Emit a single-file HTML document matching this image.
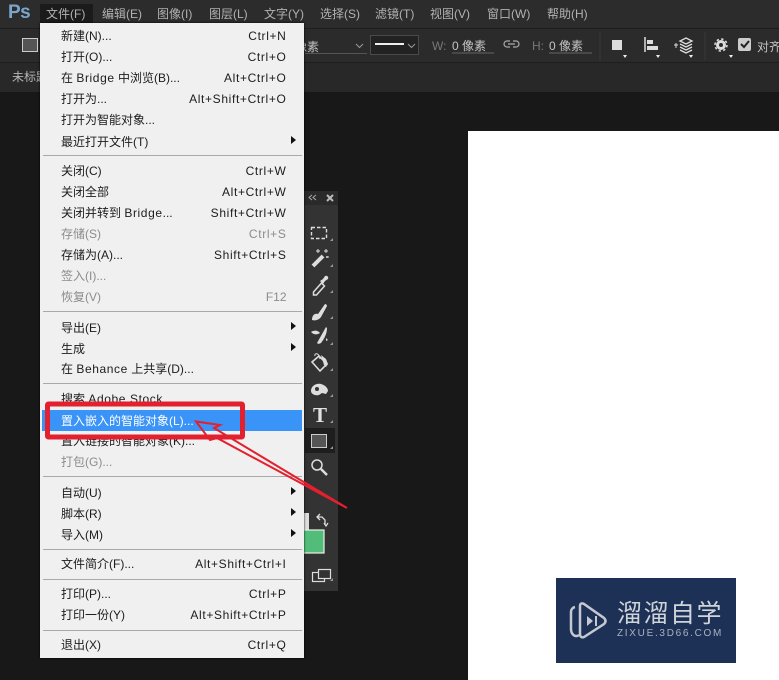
<!DOCTYPE html>
<html><head><meta charset="utf-8"><style>
*{margin:0;padding:0;box-sizing:border-box}
html,body{width:779px;height:680px;overflow:hidden;background:#191919}
body{position:relative;font-family:"Liberation Sans","Noto Sans CJK SC",sans-serif}
.a{position:absolute}
.t{position:absolute;white-space:nowrap;font-size:12px;line-height:16px}
.bar span{position:absolute;top:6px;font-size:12px;line-height:16px;color:#b2b2b2;white-space:nowrap}
.i{position:absolute;left:21px;white-space:nowrap;font-size:12px;line-height:16px;color:#1c1c1c}
.i b{font-weight:normal;letter-spacing:.6px}
.k{position:absolute;right:17.500px;white-space:nowrap;font-size:12px;line-height:16px;color:#1c1c1c;letter-spacing:.65px}
.d{color:#8c8c8c}
.s{position:absolute;left:3px;right:2px;height:1px;background:#a9a9a9}
.r{position:absolute;left:251px;width:0;height:0;border-left:5px solid #111;border-top:4px solid transparent;border-bottom:4px solid transparent}
</style></head><body>
<div class="a" style="left:0;top:0;width:779px;height:28px;background:#2c2c2c"></div>
<div class="a" style="left:0;top:28px;width:779px;height:35px;background:#2b2b2b;border-top:1px solid #1d1d1d;border-bottom:1px solid #1e1e1e"></div>
<div class="a" style="left:0;top:63px;width:779px;height:29px;background:#282828"></div>
<div class="a" style="left:0;top:92px;width:779px;height:588px;background:#181818"></div>
<div class="t" style="left:8px;top:1px;font-size:19px;line-height:24px;font-weight:bold;color:#7ba5cc;letter-spacing:-.5px">Ps</div>
<div class="a" style="left:40px;top:4px;width:53px;height:19px;background:#1b1b1b"></div>
<div class="bar">
<span style="left:46px">文件(F)</span><span style="left:102px">编辑(E)</span><span style="left:157px">图像(I)</span><span style="left:209px">图层(L)</span><span style="left:264px">文字(Y)</span><span style="left:320px">选择(S)</span><span style="left:375px">滤镜(T)</span><span style="left:430px">视图(V)</span><span style="left:487px">窗口(W)</span><span style="left:547px">帮助(H)</span>
</div>
<div class="a" style="left:22px;top:38px;width:16px;height:14px;background:#555;border:1px solid #ccc"></div>
<div class="t" style="left:12px;top:69px;color:#b5b5b5">未标题</div>
<div class="t" style="left:283px;top:39px;color:#c4c4c4;width:36px;text-align:right">像素</div>
<div class="a" style="left:305px;top:53px;width:62px;height:1px;background:#555"></div>
<svg class="a" style="left:0;top:28px" width="779" height="36" viewBox="0 28 779 36" fill="none">
<path d="M356 44l3.500 3.500 3.500-3.500" stroke="#999"/>
<rect x="370.500" y="35.500" width="48" height="19" stroke="#4a4a4a" fill="#222"/>
<path d="M375 44h29" stroke="#eee" stroke-width="2"/>
<path d="M408 44l3.500 3.500 3.500-3.500" stroke="#999"/>
<path d="M452 53h42M549 53h43" stroke="#666"/>
<path d="M510 41h-3a3 3 0 0 0 0 6h3M513 41h3a3 3 0 0 1 0 6h-3M508 44h7" stroke="#aaa" stroke-width="1.200"/>
<path d="M600 32v28M705 32v28" stroke="#383838"/>
<rect x="612" y="40" width="10" height="10" fill="#ddd"/>
<path d="M645 37v15" stroke="#ddd" stroke-width="1.500"/><rect x="647" y="40" width="6" height="4" fill="#ddd"/><rect x="647" y="46" width="11" height="4" fill="#ddd"/>
<path d="M674 45h4M676 43v5" stroke="#ddd"/>
<path d="M686 38l6 3-6 3-6-3zM680 44l6 3 6-3M680 47l6 3 6-3M680 50l6 3 6-3" stroke="#ddd" stroke-width="1.300"/>
<circle cx="721" cy="45" r="3.500" stroke="#ddd" stroke-width="3"/>
<circle cx="721" cy="45" r="6" stroke="#ddd" stroke-width="1.500" stroke-dasharray="2.400 2.300"/>
<rect x="738" y="38" width="13" height="13" rx="2" fill="#ccc"/>
<path d="M741 44l3 3 5-6" stroke="#222" stroke-width="2"/>
<path d="M623 55h4l-2 3zM656 55h4l-2 3zM689 55h4l-2 3zM729 55h4l-2 3z" fill="#eee"/>
</svg>
<div class="t" style="left:432px;top:38px;color:#777">W:</div>
<div class="t" style="left:452px;top:38px;color:#c4c4c4">0 像素</div>
<div class="t" style="left:532px;top:38px;color:#777">H:</div>
<div class="t" style="left:549px;top:38px;color:#c4c4c4">0 像素</div>
<div class="t" style="left:757px;top:39px;color:#c4c4c4">对齐</div>

<div class="a" style="left:468px;top:131px;width:311px;height:549px;background:#fff"></div>
<div class="a" style="left:556px;top:578px;width:180px;height:85px;background:#1d3055"></div>
<svg class="a" style="left:556px;top:578px" width="180" height="85" viewBox="0 0 180 85" fill="none">
<path d="M19 29a5 5 0 0 0-4 5v17c0 5 4 9 8 6" stroke="#c3c8d1" stroke-width="2.500"/>
<path d="M24 28c0-3 2-3 4-2l20 14c2 2 2 4 0 6l-20 13c-2 1-4 0-4-3z" stroke="#c3c8d1" stroke-width="2.500"/>
<path d="M31 38l6 5-6 5zM39 38h2v10h-2z" fill="#c3c8d1"/>
</svg>
<div class="t" style="left:617px;top:600px;font-size:25px;line-height:28px;color:#cfd3da;letter-spacing:1.500px">溜溜自学</div>
<div class="t" style="left:617px;top:628px;font-size:10px;line-height:12px;color:#aab1bd;letter-spacing:1.700px">ZIXUE.3D66.COM</div>

<div class="a" style="left:304px;top:191px;width:34px;height:400px;background:#333"></div>
<div class="a" style="left:304px;top:191px;width:34px;height:14px;background:#2a2a2a"></div>
<div class="a" style="left:305px;top:428px;width:30px;height:25px;background:#1e1e1e"></div>
<svg class="a" style="left:290px;top:185px" width="60" height="420" viewBox="0 0 60 420" fill="none">
<path d="M22 10l-3 2.500 3 2.500M26 10l-3 2.500 3 2.500" stroke="#aaa"/>
<path d="M37 10l6 6M43 10l-6 6" stroke="#bbb" stroke-width="2"/>
<rect x="21.500" y="42.500" width="15" height="11" stroke="#ddd" stroke-width="1.400" stroke-dasharray="3.500 2"/>
<path d="M23 81l10-10" stroke="#ddd" stroke-width="4"/>
<path d="M28 64v4M26 66h4M36 64v4M34 66h4M37 71v2M36 72h3" stroke="#ddd"/>
<path d="M23.500 107l8-9 3 3-8 9h-3z" stroke="#ddd" stroke-width="1.500"/>
<path d="M30 96l3-2 2-3c2-1 4 1 3 3l-3 2-2 3z" fill="#ddd"/>
<path d="M22 135c0-4 2-7 6-6l7-10c1 0 2 1 2 2l-6 11c-2 3-6 4-9 3z" fill="#ddd"/>
<path d="M21 147c3-2 7-2 9 1-3 2-6 2-9-1zM27 158l9-16 1 1c0 6-3 11-6 15-2 1-3 1-4 0zM36 153l2 2-2 1z" fill="#ddd"/>
<path d="M22 177l7-6 8 8-7 7z" stroke="#ddd" stroke-width="1.600"/>
<path d="M25 171c-1-3 3-3 4 0l1 3" stroke="#ddd"/>
<path d="M31 170l5 4 2 5-2 3-2-2z" fill="#ddd"/>
<path d="M21 206c0-5 5-8 10-7 4 1 7 4 7 7l-2 3-4-1-3 2c-4 1-8-1-8-4z" fill="#ddd"/><circle cx="27" cy="204" r="2" fill="#333"/>
<rect x="21.500" y="249.500" width="15" height="13" fill="#555" stroke="#ccc"/>
<circle cx="27" cy="280" r="5" stroke="#ddd" stroke-width="1.500"/><path d="M31 284l6 6" stroke="#ddd" stroke-width="2.500"/>
<path d="M43 56v-3l-3 3zM43 82v-3l-3 3zM43 108v-3l-3 3zM43 134v-3l-3 3zM43 160v-3l-3 3zM43 186v-3l-3 3zM43 212v-3l-3 3zM43 238v-3l-3 3zM43 264v-3l-3 3zM43 396v-3l-3 3z" fill="#999"/>
<path d="M27 332h5l3 3v5M34 338l2 3 2-3M30 329l-3 3 3 3" stroke="#ddd" stroke-width="1.300"/>
<rect x="10" y="328" width="9" height="17" fill="#ddd"/>
<rect x="5" y="345" width="29" height="23" fill="#52bd78" stroke="#eee" stroke-width="1.200"/>
<rect x="22.500" y="387.500" width="12" height="9" stroke="#ddd" stroke-width="1.200"/>
<rect x="28.500" y="384.500" width="12" height="9" fill="#333" stroke="#ddd" stroke-width="1.200"/>
</svg>
<div class="t" style="left:313px;top:404px;font-family:'Liberation Serif',serif;font-weight:bold;font-size:21px;line-height:22px;color:#e0e0e0">T</div>

<div class="a" style="left:40px;top:23px;width:264px;height:635px;background:#f0f0f0;box-shadow:0 0 2px #000"></div>
<div class="a" style="left:42px;top:410px;width:260px;height:21px;background:#3a93f6"></div>
<div class="a" style="left:40px;top:23px;width:264px;height:635px">
<div class="i" style="top:5px">新建(N)...</div><div class="k" style="top:5px">Ctrl+N</div>
<div class="i" style="top:26px">打开(O)...</div><div class="k" style="top:26px">Ctrl+O</div>
<div class="i" style="top:47px">在 <b>Bridge</b> 中浏览(B)...</div><div class="k" style="top:47px">Alt+Ctrl+O</div>
<div class="i" style="top:68px">打开为...</div><div class="k" style="top:68px">Alt+Shift+Ctrl+O</div>
<div class="i" style="top:89px">打开为智能对象...</div>
<div class="i" style="top:111px">最近打开文件(T)</div><div class="r" style="top:113px"></div>
<div class="s" style="top:132px"></div>
<div class="i" style="top:140px">关闭(C)</div><div class="k" style="top:140px">Ctrl+W</div>
<div class="i" style="top:161px">关闭全部</div><div class="k" style="top:161px">Alt+Ctrl+W</div>
<div class="i" style="top:182px">关闭并转到 <b>Bridge</b>...</div><div class="k" style="top:182px">Shift+Ctrl+W</div>
<div class="i d" style="top:203px">存储(S)</div><div class="k d" style="top:203px">Ctrl+S</div>
<div class="i" style="top:224px">存储为(A)...</div><div class="k" style="top:224px">Shift+Ctrl+S</div>
<div class="i d" style="top:245px">签入(I)...</div>
<div class="i d" style="top:266px">恢复(V)</div><div class="k d" style="top:266px;letter-spacing:0">F12</div>
<div class="s" style="top:288px"></div>
<div class="i" style="top:297px">导出(E)</div><div class="r" style="top:299px"></div>
<div class="i" style="top:318px">生成</div><div class="r" style="top:320px"></div>
<div class="i" style="top:338px">在 <b>Behance</b> 上共享(D)...</div>
<div class="s" style="top:360px"></div>
<div class="i" style="top:368px">搜索 <b>Adobe Stock</b>...</div>
<div class="i" style="top:390px;color:#fff">置入嵌入的智能对象(L)...</div>
<div class="i" style="top:410px">置入链接的智能对象(K)...</div>
<div class="i d" style="top:431px">打包(G)...</div>
<div class="s" style="top:453px"></div>
<div class="i" style="top:462px">自动(U)</div><div class="r" style="top:464px"></div>
<div class="i" style="top:483px">脚本(R)</div><div class="r" style="top:485px"></div>
<div class="i" style="top:504px">导入(M)</div><div class="r" style="top:506px"></div>
<div class="s" style="top:526px"></div>
<div class="i" style="top:533px">文件简介(F)...</div><div class="k" style="top:533px">Alt+Shift+Ctrl+I</div>
<div class="s" style="top:556px"></div>
<div class="i" style="top:563px">打印(P)...</div><div class="k" style="top:563px">Ctrl+P</div>
<div class="i" style="top:584px">打印一份(Y)</div><div class="k" style="top:584px">Alt+Shift+Ctrl+P</div>
<div class="s" style="top:607px"></div>
<div class="i" style="top:614px">退出(X)</div><div class="k" style="top:614px">Ctrl+Q</div>
</div>

<svg class="a" style="left:0;top:0" width="779" height="680" viewBox="0 0 779 680" fill="none">
<rect x="47.500" y="404" width="195" height="33" rx="1" stroke="#e3202e" stroke-width="5"/>
<path d="M196 421.500L220 425 214 428 347 508 217 438 210 440z" stroke="#e3202e" stroke-width="2" stroke-linejoin="miter"/>
</svg>
</body></html>
